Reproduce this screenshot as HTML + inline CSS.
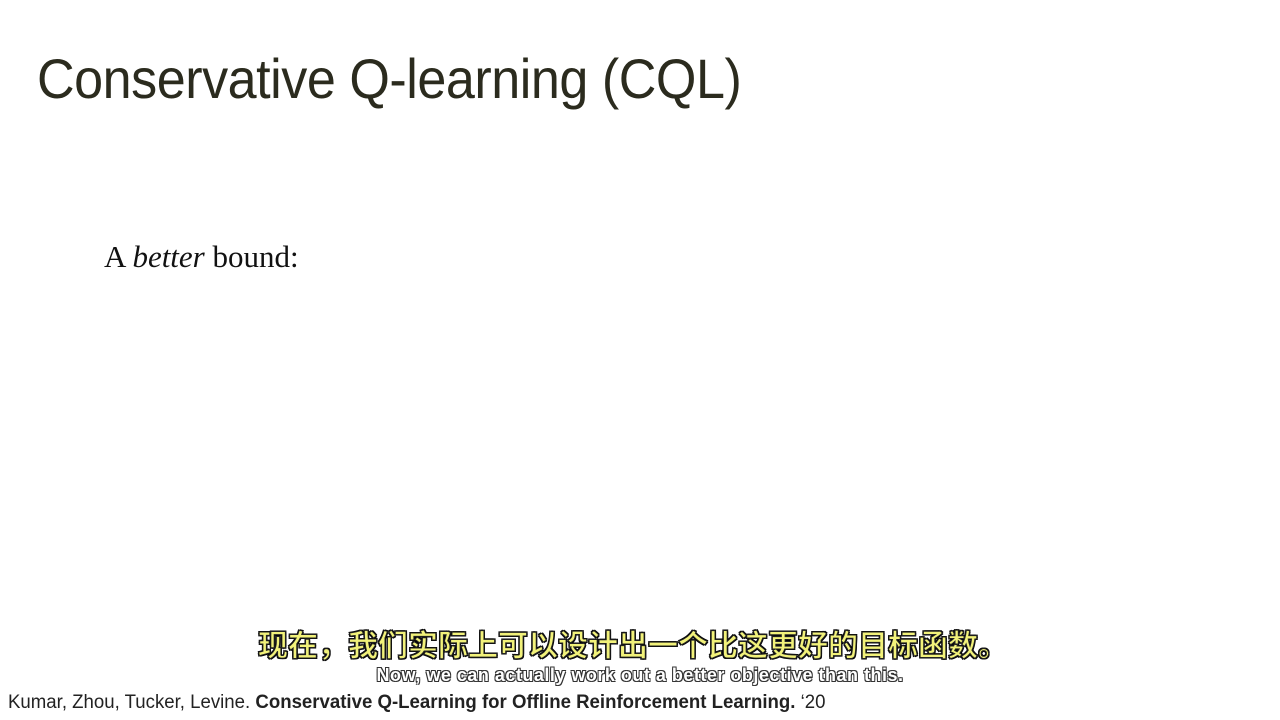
<!DOCTYPE html>
<html><head><meta charset="utf-8"><style>
body{margin:0;width:1280px;height:720px;background:#fff;position:relative;overflow:hidden;font-family:"Liberation Sans",sans-serif}
.t{position:absolute;left:37px;top:46px;font-size:56px;color:#2b2b1e;letter-spacing:-0.5px;white-space:nowrap;transform:scaleX(0.93);transform-origin:left}
.b{position:absolute;left:104px;top:239px;font-family:"Liberation Serif",serif;font-size:31px;color:#111}
.zh{position:absolute;left:0;width:1266px;text-align:center;top:621px;font-family:"Noto Sans CJK SC",sans-serif;font-weight:bold;font-size:30px;color:#f2f27a;-webkit-text-stroke:1px #222;text-shadow:1px 1px 0 #000,-1px -1px 0 #000,1px -1px 0 #000,-1px 1px 0 #000}
.en{position:absolute;left:0;width:1280px;text-align:center;top:665px;font-size:18px;letter-spacing:0.5px;font-weight:bold;color:#fff;text-shadow:1px 1px 0 #333,-1px -1px 0 #333,1px -1px 0 #333,-1px 1px 0 #333;white-space:nowrap}
.c{position:absolute;left:8px;top:692px;font-size:19px;color:#222;white-space:nowrap;transform:scaleX(0.98);transform-origin:left}
</style></head><body>
<div class="t">Conservative Q-learning (CQL)</div>
<div class="b">A <i>better</i> bound:</div>
<div class="zh">现在，我们实际上可以设计出一个比这更好的目标函数。</div>
<div class="en">Now, we can actually work out a better objective than this.</div>
<div class="c">Kumar, Zhou, Tucker, Levine. <b>Conservative Q-Learning for Offline Reinforcement Learning.</b> ‘20</div>
</body></html>
